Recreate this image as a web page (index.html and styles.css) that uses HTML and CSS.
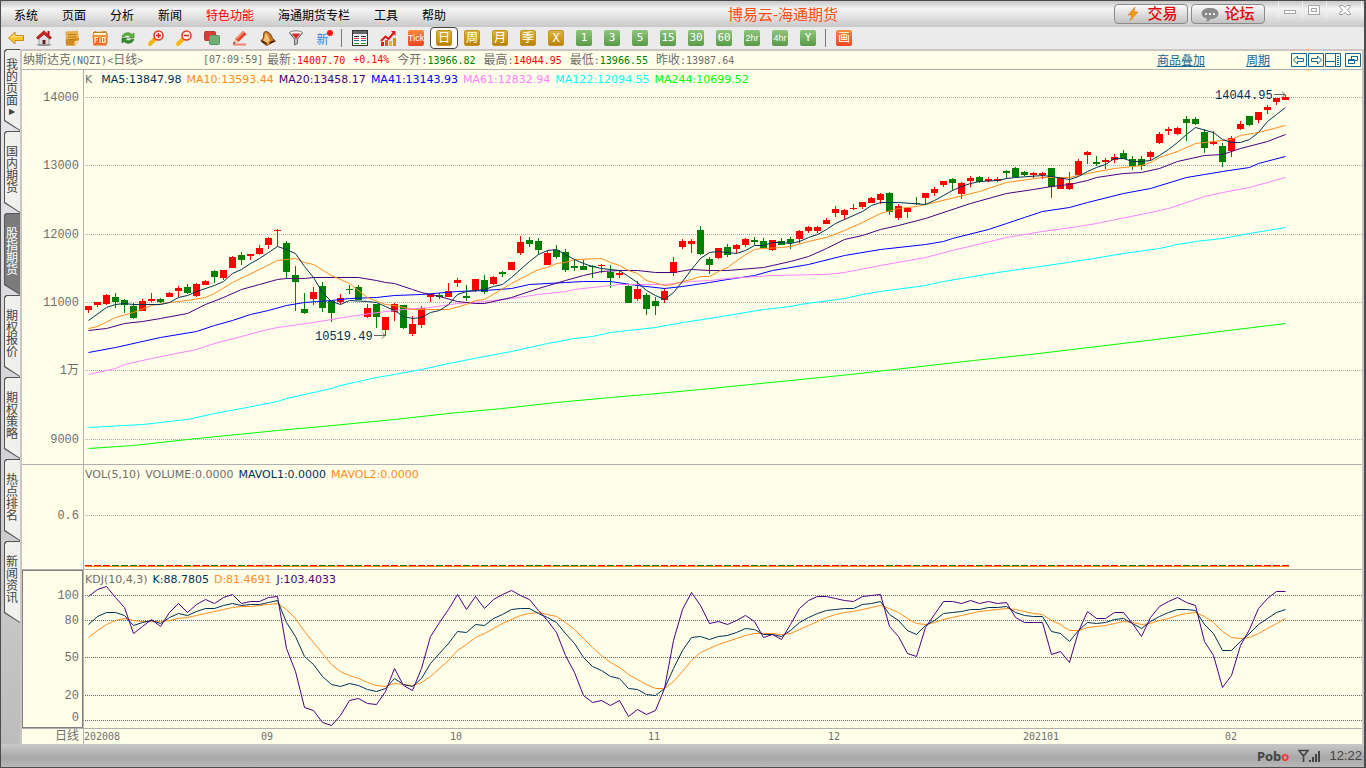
FILE: index.html
```html
<!DOCTYPE html>
<html lang="zh-CN">
<head>
<meta charset="utf-8">
<title>博易云-海通期货</title>
<link rel="stylesheet" href="styles.css">
</head>
<body>
<div class="app">
  <header class="titlebar">
    <nav class="menu">
      <button>系统</button><button>页面</button><button>分析</button><button>新闻</button><button class="hot">特色功能</button><button>海通期货专栏</button><button>工具</button><button>帮助</button>
    </nav>
    <h1 class="title">博易云-海通期货</h1>
    <div class="actions">
      <button class="pill"><svg width="18" height="16" viewBox="0 0 18 16"><path d="M11 1 4 9h4l-2 6 8-9H10z" fill="#f59a1d" stroke="#d97a10" stroke-width=".6"/></svg>交易</button>
      <button class="pill"><svg width="18" height="16" viewBox="0 0 18 16"><path d="M9 2c5 0 8.500 2 8.500 5.500S14 13 9.500 13c-1 2-3 2.500-4.500 2.500 1-.8 1-2 .8-3C2.500 12 .5 10 .5 7.500.5 4 4 2 9 2z" fill="#8a8a8a"/><g fill="#eee"><rect x="4" y="7" width="2" height="2"/><rect x="8" y="7" width="2" height="2"/><rect x="12" y="7" width="2" height="2"/></g></svg>论坛</button>
    </div>
    <div class="winctl">
      <button aria-label="最小化"><svg width="12" height="12" viewBox="0 0 12 12"><rect x=".5" y="6.500" width="11" height="3" fill="#fff" stroke="#a5a5a5"/></svg></button>
      <button aria-label="最大化"><svg width="12" height="12" viewBox="0 0 12 12"><path d="M.5 1.500h11v9H.5zM3.500 4.500h5v3h-5z" fill="#fff" stroke="#a5a5a5" fill-rule="evenodd"/></svg></button>
      <button class="close" aria-label="关闭"><svg width="12" height="12" viewBox="0 0 12 12"><path d="M.5 1.500h3.500l2 2 2-2h3.500v1L8.500 6l3 3.500v1H8l-2-2-2 2H.5v-1L3.500 6l-3-3.500z" fill="#fff" stroke="#9a9a9a"/></svg></button>
    </div>
  </header>

  <div class="toolbar">
    <button aria-label="后退"><svg viewBox="0 0 16 16"><path d="M.5 8 7 2v3.500h8.500v5H7V14z" fill="#fcc62c" stroke="#c98a12"/><path d="M3 8l3.500-3v1.500H14" fill="none" stroke="#ffe9a0"/></svg></button>
    <button aria-label="首页"><svg viewBox="0 0 16 16"><path d="M11.500 1h2v4h-2z" fill="#a61414"/><path d="M3 8l5-4 5 4v7.500H3z" fill="#dcdce2" stroke="#777" stroke-width=".6"/><path d="M8 .8 15.500 7.500 14 9.200 8 4.200 2 9.200.5 7.500z" fill="#d32222" stroke="#8e1010" stroke-width=".7"/><path d="M6.500 10h3v5.500h-3z" fill="#64241a"/><path d="M1 14h14v1.500H1z" fill="#999"/></svg></button>
    <button aria-label="笔记"><svg viewBox="0 0 16 16"><path d="M1.500 1.500 14 .8l1 9.200-4 5.500H2z" fill="#e8b04a"/><path d="M1.700 9.500l13.200-1.500.1 2-4 5.500H2z" fill="#d28b22"/><path d="M10.500 15.500V11.500l4.500-1.500z" fill="#ffe2a0"/><path d="M4 4.500h8M4 7h8.500M4 9.500h6" stroke="#b57c1c"/></svg></button>
    <button aria-label="F10 资料"><svg viewBox="0 0 16 16"><path d="M1 2l3-1 1 1 9-1 1.500 3v9.500L2 15.500z" fill="#c98322"/><path d="M2 3h12v4H2z" fill="#fff5dd"/><path d="M.5 5h15l-1 10.500h-13z" fill="#f06a28"/><path d="M.5 5h15l-.4 3H.8z" fill="#f7923c"/><path d="M3 13V7.500h3M3 10h2.500M8 7.500V13M10.500 7.500h2.500V12.500h-2.500z" fill="none" stroke="#fff3cf" stroke-width="1.200"/></svg></button>
    <button aria-label="刷新"><svg viewBox="0 0 16 16"><path d="M2 6.500C3.500 2.500 9 1.500 12 4.500L14 3v5H8.500l2-1.800C8 4.500 6 5 5 6.500z" fill="#5cb536" stroke="#2b7a19" stroke-width=".6"/><path d="M14 9.500c-1.500 4-7 5-10 2L2 13V8h5.500l-2 1.800c2.500 1.700 4.500 1.200 5.500-.3z" fill="#388d2c" stroke="#1f6516" stroke-width=".6"/></svg></button>
    <button aria-label="放大"><svg viewBox="0 0 16 16"><path d="M7 9 2 14" stroke="#f4b50f" stroke-width="4" stroke-linecap="round"/><circle cx="10.500" cy="5.500" r="4.500" fill="#fff1e8" stroke="#dd3d20" stroke-width="1.500"/><path d="M8 5.500h5M10.500 3v5" stroke="#e02020" stroke-width="1.500"/></svg></button>
    <button aria-label="缩小"><svg viewBox="0 0 16 16"><path d="M7 9 2 14" stroke="#f4b50f" stroke-width="4" stroke-linecap="round"/><circle cx="10.500" cy="5.500" r="4.500" fill="#fff1e8" stroke="#dd3d20" stroke-width="1.500"/><path d="M8 5.500h5" stroke="#e02020" stroke-width="1.500"/></svg></button>
    <button aria-label="叠加"><svg viewBox="0 0 16 16"><rect x=".5" y="1.500" width="11" height="9" rx="1" fill="#dc3c34" stroke="#b0403a"/><rect x="5.500" y="5.500" width="10" height="9" rx="1" fill="#6fae76" stroke="#5c9464"/></svg></button>
    <button aria-label="画线"><svg viewBox="0 0 16 16"><path d="M1 14.500h13" stroke="#f08072" stroke-width="2"/><path d="M3 9 11 1l3.500 3-8 8z" fill="#e8452c"/><path d="M4.500 9 11.500 2" stroke="#ff9a78" stroke-width="1.500"/><path d="M3 9l3.500 3L1 14z" fill="#f1c79b"/><path d="M1 14l2.500-1L2 11.500z" fill="#333"/></svg></button>
    <button aria-label="预警"><svg viewBox="0 0 16 16"><path d="M5 1.500c5 0 6.500 4 7.500 7l3 2.500-9 4.500L.8 11l2.200-2.500C4 6.500 3 2.500 5 1.500z" fill="#c8782a" stroke="#7a3d12"/><path d="M5.500 3c2 1 3.500 4 4.500 8L6 13 3 10.500c2-2 1.500-5 2.500-7.500z" fill="#f6c16c"/><path d="M2 11l5 3 7-3" fill="none" stroke="#4b210b" stroke-width="1.500"/><circle cx="8" cy="13" r="1.500" fill="#e8a23a"/></svg></button>
    <button aria-label="过滤"><svg viewBox="0 0 16 16"><path d="M1.500 3 6.500 9v6l3-1.500V9l5-6z" fill="#bfc3c9" stroke="#666"/><ellipse cx="8" cy="3" rx="6.500" ry="2.200" fill="#f5f5f5" stroke="#777"/><path d="M4 3.500h8L8 9z" fill="#e42626"/></svg></button>
    <button class="new">新<i></i></button>
    <span class="sep"></span>
    <button aria-label="报价表"><svg viewBox="0 0 16 16"><rect x=".5" y=".5" width="15" height="15" fill="#fff" stroke="#333"/><path d="M1 1h14v3H1z" fill="#666"/><path d="M2 6.500h5M9 6.500h5" stroke="#222"/><path d="M2 8.500h5M9 8.500h5" stroke="#d33"/><path d="M2 10.500h5M9 10.500h5" stroke="#26a"/><path d="M2 13.500h5M9 13.500h5" stroke="#291"/></svg></button>
    <button aria-label="走势"><svg viewBox="0 0 16 16"><path d="M1 12h3v4H1z" fill="#c82a18"/><path d="M5 10h3v6H5z" fill="#df5a20"/><path d="M9 11h3v5H9z" fill="#f2b32a"/><path d="M13 8h3v8h-3z" fill="#c89612"/><path d="M1 11 5.500 6.500 8.500 9 14 2.500" fill="none" stroke="#e01818" stroke-width="2"/><path d="M11 1h4.500v5z" fill="#e01818"/></svg></button>
    <button><b class="tile red tiny">Tick</b></button>
    <button class="on"><b class="tile gold">日</b></button>
    <button><b class="tile gold">周</b></button>
    <button><b class="tile gold">月</b></button>
    <button><b class="tile gold">季</b></button>
    <button><b class="tile gold">X</b></button>
    <button><b class="tile green">1</b></button>
    <button><b class="tile green">3</b></button>
    <button><b class="tile green">5</b></button>
    <button><b class="tile green">15</b></button>
    <button><b class="tile green">30</b></button>
    <button><b class="tile green">60</b></button>
    <button><b class="tile green tiny">2hr</b></button>
    <button><b class="tile green tiny">4hr</b></button>
    <button><b class="tile green">Y</b></button>
    <span class="sep"></span>
    <button><b class="tile red">画</b></button>
  </div>

  <div class="body">
    <aside class="tabs">
      <button>我的页面<em>▶</em></button>
      <button>国内期货</button>
      <button class="active">股指期货</button>
      <button>期权报价</button>
      <button>期权策略</button>
      <button>热点排名</button>
      <button>新闻资讯</button>
    </aside>
    <main class="chart">
      <div class="info">
        <span class="name"><q>纳斯达克</q>(NQZI)&lt;<q>日线</q>&gt;</span>
        <span class="time">[07:09:59]</span>
        <span><q>最新</q>:<b class="up">14007.70</b></span>
        <span class="up">+0.14%</span>
        <span><q>今开</q>:<b class="down">13966.82</b></span>
        <span><q>最高</q>:<b class="up">14044.95</b></span>
        <span><q>最低</q>:<b class="down">13966.55</b></span>
        <span><q>昨收</q>:13987.64</span>
        <div class="links">
          <a href="#overlay">商品叠加</a>
          <a href="#period">周期</a>
          <div class="icons">
            <button aria-label="左移"><svg width="16" height="14" viewBox="0 0 16 14"><path d="M.5.5h15v13H.5zM2.500 7l4-4v2.500h6v3h-6V11z"/></svg></button>
            <button aria-label="右移"><svg width="16" height="14" viewBox="0 0 16 14"><path d="M.5.5h15v13H.5zM13.500 7l-4-4v2.500h-6v3h6V11z"/></svg></button>
            <button aria-label="侧栏"><svg width="16" height="14" viewBox="0 0 16 14"><path d="M.5.5h15v13H.5zM10.500 1v13M1 8.500h9M12 3.500h2M12 5.500h2M12 7.500h2M12 9.500h2M12 11.500h2"/></svg></button>
            <button aria-label="还原" class="restore"><svg width="16" height="14" viewBox="0 0 16 14"><path d="M.5.5h15v13H.5zM6.500 6V3.500h6v4H10M6 3.500h7M3.500 6.500h6v4h-6zM3 7.500h7"/></svg></button>
          </div>
        </div>
      </div>
      <section class="panel price">
        <svg class="axis" id="price-axis"></svg>
        <div class="plot">
          <p class="legend"><span>K</span><span class="c5 first">MA5:13847.98</span><span class="c10">MA10:13593.44</span><span class="c20">MA20:13458.17</span><span class="c41">MA41:13143.93</span><span class="c61">MA61:12832.94</span><span class="c122">MA122:12094.55</span><span class="c244">MA244:10699.52</span></p>
          <svg id="price-plot"></svg>
        </div>
      </section>
      <section class="panel vol">
        <svg class="axis" id="vol-axis"></svg>
        <div class="plot">
          <p class="legend"><span>VOL(5,10)</span><span>VOLUME:0.0000</span><span class="c5">MAVOL1:0.0000</span><span class="c10">MAVOL2:0.0000</span></p>
          <svg id="vol-plot"></svg>
        </div>
      </section>
      <section class="panel kdj">
        <svg class="axis boxed" id="kdj-axis"></svg>
        <div class="plot">
          <p class="legend"><span>KDJ(10,4,3)</span><span class="c5">K:88.7805</span><span class="c10">D:81.4691</span><span class="c20">J:103.4033</span></p>
          <svg id="kdj-plot"></svg>
        </div>
      </section>
      <section class="panel dates">
        <span class="axis">日线</span>
        <div class="plot"><svg id="date-plot"></svg></div>
      </section>
    </main>
  </div>

  <footer class="status">
    <strong>Pob<i>o</i></strong>
    <svg width="22" height="14" viewBox="0 0 22 14"><path d="M1 1.500h9L6.500 6h-2zM5.500 5v8" fill="none" stroke="#444" stroke-width="1.600"/><path d="M11 11h2v2h-2zM14 8h2v5h-2zM17 5h2v8h-2zM20 2h2v11h-2z" fill="#444"/></svg>
    <time>12:22</time>
  </footer>
</div>
<script src="chart.js"></script>
</body>
</html>
```

FILE: styles.css
```css
* { box-sizing: border-box; }
body { margin: 0; font-family: "Liberation Sans", "Noto Sans CJK SC", sans-serif; font-size: 12px; color: #000; }
button { font: inherit; color: inherit; border: 0; padding: 0; margin: 0; background: none; }
svg { display: block; }
b, i, em { font-weight: normal; font-style: normal; }
q { quotes: none; font-size: 12px; }

.app { height: 100vh; display: flex; flex-direction: column; border: 1px solid #4d4b4d; border-right-width: 2px; background: #c4c4c4; overflow: hidden; }

.titlebar { display: flex; align-items: center; flex: none; height: 26px; padding-left: 13px; background: linear-gradient(#c6c6c6, #f4f4f4 30%, #e6e6e6 55%, #c8c8c8); }
.menu { display: flex; gap: 24px; padding-top: 3px; line-height: 18px; }
.menu .hot { color: #f00; }
.title { flex: 1; margin: 0; padding: 2px 0 0 6px; text-align: center; font-size: 15px; line-height: 20px; font-weight: normal; color: #ff4e10; }
.actions { display: flex; gap: 3px; }
.pill { display: flex; align-items: center; justify-content: center; gap: 5px; width: 74px; height: 20px; border: 1px solid #8a8a8a; border-radius: 4px; background: linear-gradient(#fbfbfb, #e2e2e2 45%, #c2c2c2); color: #e00808; font-size: 15px; font-weight: 500; line-height: 18px; }
.winctl { display: flex; align-self: flex-start; margin: 0 2px 0 13px; }
.winctl button { width: 24px; height: 17px; padding: 2px 5px; border-left: 1px solid #f2f2f2; }
.winctl .close { width: 36px; padding-left: 12px; border-right: 1px solid #f2f2f2; }

.toolbar { display: flex; flex: none; height: 22px; padding-left: 1px; background: #ebebeb; }
.toolbar button { display: flex; align-items: center; justify-content: center; width: 28px; height: 22px; }
.toolbar svg { width: 16px; height: 16px; }
.toolbar .on { border: 1px solid #444; border-radius: 4px; background: #fff; }
.toolbar .new { position: relative; padding-right: 3px; font-size: 12px; color: #2f87dd; }
.new i { position: absolute; top: 3px; right: 5px; width: 6px; height: 6px; border-radius: 50%; background: #f11; }
.sep { width: 8px; height: 18px; margin-top: 2px; background: linear-gradient(#777, #777) 3px 0 / 1px 100% no-repeat; }
.tile { width: 16px; height: 16px; border-radius: 2px; color: #fff; text-align: center; font: 12px/16px "DejaVu Sans Mono", "Noto Sans CJK SC", monospace; }
.tile.tiny { font: 9px/16px "Liberation Sans", sans-serif; }
.gold { background: linear-gradient(#d9b54c, #cc9a10 60%, #b58010); border: 1px solid #c8921c; line-height: 14px; }
.green { background: linear-gradient(#8fc57c, #579a46); font-size: 11px; }
.red { background: linear-gradient(#fa8a3a, #ea4420); }

.body { display: flex; flex: 1; min-height: 0; }
.tabs { display: flex; flex-direction: column; flex: none; width: 19px; padding-left: 3px; background: linear-gradient(#e8e8ec, #d2d2d6 60%, #bcbcbc); }
.tabs button { position: relative; z-index: 0; display: flex; flex-direction: column; align-items: center; justify-content: center; width: 16px; height: 82px; padding: 0 2px 5px; color: #444; line-height: 12px; word-break: break-all; white-space: normal; background: #555; clip-path: polygon(0 2px, 2px 0, 100% 0, 100% 100%, 0 72px); }
.tabs button::before { content: ""; position: absolute; z-index: -1; inset: 1px 0 1px 1px; background: #f0f0ec; clip-path: polygon(0 2px, 2px 0, 100% 0, 100% 100%, 0 70px); }
.tabs .active { color: #fff; }
.tabs .active::before { background: #7b7b7b; }
.tabs em { font: 8px/10px "DejaVu Sans", sans-serif; }

.chart { display: flex; flex-direction: column; flex: 1; min-width: 0; border: 2px solid #cdc4c4; border-bottom: 0; background: #ffffe9; color: #6e6e6e; }
.info { display: flex; align-items: center; flex: none; gap: 8px; height: 19px; padding: 0 1px; border-bottom: 1px solid #b0b0b0; font: 10px/18px "DejaVu Sans Mono", monospace; white-space: nowrap; }
.info q { font-family: "Noto Sans CJK SC", sans-serif; }
.info .name { width: 172px; }
.info .time { width: 56px; }
.up { color: #f00; }
.down { color: #008000; }
.links { display: flex; align-items: center; margin-left: auto; font: 12px/18px "Noto Sans CJK SC", sans-serif; }
.links a { margin-right: 41px; color: #17668f; }
.links a + a { margin-right: 21px; }
.icons { display: flex; gap: 1px; }
.icons .restore { margin-left: 3px; }
.icons path { fill: none; stroke: #17668f; }

.panel { display: flex; flex: none; border-bottom: 1px solid #b0b0b0; }
.price { flex: 1; min-height: 0; }
.vol { height: 105px; }
.kdj { height: 159px; }
.dates { height: 15px; border-bottom: 0; }
.axis { flex: none; width: 61px; height: 100%; }
.boxed { border: 1px solid #808080; }
.dates .axis { padding-right: 4px; text-align: right; line-height: 15px; }
.plot { position: relative; flex: 1; min-width: 0; border-left: 1px solid #b0b0b0; overflow: hidden; }
.plot svg { width: 100%; height: 100%; }
.legend { position: absolute; top: 1px; left: 1px; display: flex; gap: 5px; margin: 0; font: 11px/18px "DejaVu Sans", sans-serif; white-space: nowrap; }
.legend .first { margin-left: 4px; }
.c5 { color: #003058; }
.c10 { color: #ff8c1a; }
.c20 { color: #4b0082; }
.c41 { color: #00f; }
.c61 { color: #ff80ff; }
.c122 { color: #00ffff; }
.c244 { color: #00ff00; }

svg text { font: 12px "Liberation Mono", "Noto Sans CJK SC", monospace; fill: #6e6e6e; }
.axis text { text-anchor: end; }
#date-plot text { font: 10px "DejaVu Sans Mono", monospace; }
#price-plot .mark { fill: #003058; }
.line { fill: none; stroke: currentColor; }
.grid { stroke: #aaa; stroke-dasharray: 1 1; }
.kdj .grid { stroke: #666; }
.arrow { fill: none; stroke: #666; }

.status { display: flex; align-items: center; justify-content: flex-end; flex: none; gap: 9px; height: 23px; padding-right: 2px; background: linear-gradient(#c8c8c8, #a8a8a8 60%, #b8b8b8); color: #444; }
.status strong { font: bold 13px/20px "Noto Sans", sans-serif; }
.status strong i { color: #f33; font-weight: bold; }
.status time { font-size: 13px; }
```

FILE: chart.js
```js
const NS = 'http://www.w3.org/2000/svg';
const STEP = 9;
const LEFT = 84;
const TOP = { price: 70, vol: 465, kdj: 570 };

function add(parent, tag, attrs, text) {
  const el = document.createElementNS(NS, tag);
  for (const k in attrs) el.setAttribute(k, attrs[k]);
  if (text) el.textContent = text;
  parent.appendChild(el);
  return el;
}
const get = id => document.getElementById(id);

function grid(name, rows) {
  const inset = name === 'kdj' ? 1 : 0;
  for (const [label, y, labelY] of rows) {
    const row = y - TOP[name];
    add(get(name + '-plot'), 'line', { class: 'grid', x1: 1, x2: '100%', y1: row + 0.5, y2: row + 0.5 });
    add(get(name + '-axis'), 'text', { x: 57 - inset, y: (labelY || y) - TOP[name] + 4 - inset }, label);
  }
}
grid('price', [['14000', 97], ['13000', 165], ['12000', 234], ['11000', 302], ['1万', 370], ['9000', 439]]);
grid('vol', [['0.6', 515]]);
grid('kdj', [['100', 595], ['80', 620], ['50', 657], ['20', 695], ['0', 720, 717]]);

// direction, high, body top, body bottom, low
const candles = `r306 306 310 313,r302 302 305 307,r294 295 304 305,g293 297 302 308,g299 300 305 313,g303 306 318 319,r299 301 311 311,r293 299 301 302,g298 299 302 303,r292 293 297 297,
r286 288 291 297,g284 287 293 294,r283 284 296 297,r280 281 285 285,g270 271 277 283,r270 270 278 280,r256 257 268 268,g252 255 260 265,r254 254 256 260,r245 248 254 255,
r237 238 245 249,r229 230 231 246,g241 243 272 278,g266 275 282 311,g293 309 313 314,r287 292 299 305,g282 286 308 312,g301 301 313 322,r294 298 302 304,g285 289 290 294,
g285 287 300 300,r304 308 317 318,g304 304 317 328,r317 317 330 336,r303 304 312 321,g305 305 328 329,r316 324 334 336,r306 308 325 328,r294 294 297 302,g293 295 297 299,
r283 291 297 297,r278 280 283 287,g285 296 298 301,r279 279 290 292,g275 280 292 294,r276 277 284 285,g271 272 274 277,r262 262 270 270,r236 242 253 255,g237 240 244 247,
g238 241 250 255,r251 253 265 265,g245 250 257 259,g249 252 270 272,g260 266 268 271,g260 266 270 270,g265 266 267 278,r264 265 266 273,g265 272 278 288,r270 273 275 278,
g285 286 303 303,r281 289 299 301,g293 295 309 315,g297 301 306 315,r288 291 300 303,r257 262 273 276,r239 241 247 249,r239 241 244 253,g226 230 254 255,g257 259 265 274,
r248 248 258 259,g244 247 255 257,r244 245 249 253,r238 239 245 247,g237 240 242 245,g238 241 248 248,r240 240 250 251,g238 241 245 245,g237 239 243 249,r230 231 239 243,
r226 227 231 233,r226 227 231 233,r218 220 224 224,r206 209 213 217,r209 210 215 220,r204 208 209 210,r202 202 207 209,r197 198 203 203,r193 194 200 204,g192 193 212 215,
r204 206 218 220,r208 208 212 218,g197 203 204 205,r193 193 198 204,r187 189 193 196,r181 181 185 187,g178 179 183 191,r182 183 194 199,r176 178 181 187,g176 177 182 183,
r177 179 181 182,r177 179 181 182,g170 171 173 178,g167 168 177 178,g171 172 175 176,r172 173 175 178,r172 173 175 179,g168 168 187 198,r178 178 189 189,r172 183 189 190,
r159 161 175 175,r151 152 155 164,g156 162 164 166,r158 160 162 169,r154 157 160 163,g150 153 159 159,g156 159 166 170,g156 159 166 170,r151 152 157 161,r132 134 143 144,
r127 129 131 135,r127 128 134 135,g116 119 123 141,g117 119 124 125,g129 132 148 153,r131 142 144 145,g143 146 162 167,r136 138 151 157,r121 124 129 130,g116 116 125 126,
r112 112 120 123,r105 107 110 114,r98 98 102 105,r95 97 100 100`.split(',').map(s => s.trim());

candles.forEach((c, i) => {
  const fill = c[0] === 'r' ? '#ff0000' : '#008000';
  const [hi, top, bottom, lo] = c.slice(1).split(' ').map(n => n - TOP.price);
  const x = 88 - LEFT + i * STEP;
  add(get('price-plot'), 'rect', { x, y: hi, width: 1, height: lo - hi, fill });
  add(get('price-plot'), 'rect', { x: x - 3, y: top, width: 7, height: bottom - top, fill });
  add(get('vol-plot'), 'rect', { x: x - 3, y: 100, width: 7, height: 1, fill });
  if (i) add(get('vol-plot'), 'rect', { x: x - 5, y: 100, width: 2, height: 1, fill: '#ffffff' });
});
add(get('vol-plot'), 'rect', { x: 1, y: 101, width: 1204, height: 1, fill: '#ff8c1a' });

function line(svg, cls, pts, top) {
  const points = pts.map(([x, y]) => `${x - LEFT + 0.5},${y - top + 0.5}`).join(' ');
  add(svg, 'polyline', { class: 'line ' + cls, points });
}
const averages = {
  c244: '88,448 133,445 187,439 277,430 322,426 394,419 448,413 502,408 556,402 610,397 646,394 700,389 850,374 973,360 1030,354 1147,340 1285,323',
  c122: '88,427 124,425 142,424 187,419 214,413 241,408 277,401 286,398 331,388 340,385 376,377 394,374 421,369 448,363 484,356 511,351 547,343 574,338 592,336 610,332 655,327 682,322 709,318 727,315 763,309 790,306 799,304 844,298 862,294 880,291 925,285 943,281 997,272 1033,267 1087,259 1123,253 1159,248 1177,244 1195,241 1222,238 1249,233 1285,227',
  c41: '88,352 115,347 160,337 196,331 214,325 232,320 250,314 268,310 286,305 304,302 331,300 349,298 376,297 394,295 421,294 457,291 484,290 511,288 529,284 565,282 583,281 610,281 637,285 664,288 682,286 709,282 727,279 754,275 772,270 808,264 844,255 880,249 925,244 943,241 952,238 988,229 1006,223 1024,217 1042,211 1069,207 1087,202 1123,193 1150,188 1186,177 1204,174 1222,171 1249,167 1258,163 1285,156',
  c61: '88,374 115,368 124,364 151,358 196,349 214,343 241,336 259,331 277,327 313,322 349,316 385,311 403,309 430,307 457,303 484,301 511,298 538,294 565,291 574,289 601,286 619,284 664,284 691,281 709,280 727,278 772,275 826,274 844,272 880,265 925,257 952,250 1006,237 1042,231 1078,226 1096,223 1150,212 1168,208 1204,196 1222,192 1249,187 1267,182 1285,177',
  c20: '88,330 106,328 124,323 142,321 160,318 187,313 205,304 223,297 241,289 259,284 277,279 286,278 304,278 313,277 358,277 376,280 385,282 394,283 412,289 421,292 439,296 457,301 475,303 484,303 511,297 538,288 565,280 583,275 601,271 619,270 637,270 655,272 673,272 691,269 709,270 727,270 763,267 790,261 808,256 826,248 844,239 862,235 880,229 898,225 925,218 970,203 1006,193 1033,189 1051,186 1069,184 1087,180 1096,177 1123,173 1141,172 1159,168 1177,161 1204,155 1222,154 1240,148 1267,141 1285,134',
  c10: '88,328 97,326 115,317 133,312 151,305 169,302 187,300 205,297 214,293 232,282 259,269 277,260 295,258 304,262 313,264 331,275 349,283 367,297 385,304 394,305 412,309 448,309 466,304 475,300 484,299 511,283 538,269 547,267 556,263 565,262 574,259 601,258 610,262 619,265 628,270 637,273 646,280 664,285 673,284 682,281 691,279 700,276 709,276 718,271 727,267 745,254 754,249 763,248 781,247 790,246 808,241 826,237 844,230 862,222 880,213 898,208 916,206 934,202 979,191 1006,182 1042,177 1069,177 1087,173 1114,168 1141,165 1150,162 1159,157 1177,151 1195,143 1213,141 1231,139 1240,135 1258,132 1285,125',
  c5: '88,320 106,307 115,304 124,303 133,304 160,304 169,302 178,297 187,295 196,291 214,285 223,281 232,273 241,269 250,263 259,258 268,252 277,246 286,249 295,253 304,266 313,277 322,292 331,301 340,304 349,300 367,301 376,302 385,306 394,310 403,316 412,318 421,317 430,312 439,310 448,304 457,294 466,291 475,290 484,289 493,286 502,284 511,277 529,261 538,254 547,250 556,249 565,254 574,259 583,263 592,266 601,268 610,269 619,270 628,276 637,282 646,290 655,295 664,299 673,292 682,281 691,269 700,258 709,252 718,251 736,253 745,250 754,245 763,245 772,242 781,242 790,243 799,241 808,237 817,234 826,229 835,223 844,219 862,211 871,205 880,202 898,202 925,204 934,200 943,195 952,190 961,186 970,183 979,181 997,180 1006,178 1015,177 1042,175 1051,176 1069,179 1078,176 1087,171 1096,167 1105,164 1114,158 1123,158 1132,161 1141,161 1150,160 1159,155 1168,149 1177,142 1186,134 1195,127 1213,132 1222,139 1231,142 1240,142 1249,139 1258,132 1267,121 1276,114 1285,107'
};
for (const cls in averages) {
  line(get('price-plot'), cls, averages[cls].split(' ').map(p => p.split(',').map(Number)), TOP.price);
}

for (const [label, x, y] of [['10519.49', 315, 340], ['14044.95', 1215, 99]]) {
  const px = x - LEFT, py = y - TOP.price;
  add(get('price-plot'), 'text', { class: 'mark', x: px, y: py }, label);
  add(get('price-plot'), 'path', { class: 'arrow', d: `M${px + 59} ${py - 4.5}h11m-3 -3l3 3l-3 3` });
}

// oscillator values in thirds of a pixel below the base row
const BASE = 565;
const kdj = {
  c10: [217,196,178,166,160,166,170,170,170,166,160,157,151,145,139,133,127,124,124,121,118,115,133,160,199,232,265,298,319,331,340,352,361,364,355,358,361,352,333,310,286,256,238,217,205,190,175,163,151,145,142,148,154,172,193,220,247,270,292,307,328,343,358,370,370,349,319,286,262,250,238,229,220,211,205,205,205,208,205,193,181,169,157,148,142,139,133,127,121,130,142,160,175,178,172,163,157,151,145,139,136,133,130,133,139,145,148,166,178,196,196,187,184,181,175,169,172,178,175,166,160,151,145,142,154,172,199,217,220,217,205,190,175,160],
  c5: [179,154,142,142,151,181,172,166,175,157,145,151,139,130,130,121,115,121,118,118,112,106,172,213,274,298,333,358,364,355,361,373,379,370,340,358,364,340,295,265,235,199,202,178,181,160,148,133,130,130,145,157,172,205,235,277,304,316,334,340,370,373,388,391,370,310,256,217,214,223,214,211,202,190,193,208,208,214,196,172,157,145,136,133,130,130,118,115,109,148,166,196,208,180,166,145,142,139,133,133,127,127,124,142,151,154,154,199,205,229,196,172,175,172,163,160,175,190,168,154,142,133,133,136,178,205,256,256,229,205,178,160,142,133],
  c20: [94,73,64,97,127,205,184,163,184,142,115,142,119,103,115,97,88,115,109,109,97,94,250,318,427,436,472,481,451,406,400,415,418,380,310,360,376,310,213,173,132,88,132,94,130,103,88,76,91,103,137,166,202,270,322,390,412,406,421,406,454,433,448,436,370,226,132,83,122,175,169,178,166,151,169,217,208,223,178,130,106,94,94,100,106,109,94,91,88,184,214,265,274,187,148,109,109,115,106,115,109,115,112,157,172,172,172,268,259,292,200,139,160,160,142,142,175,214,157,124,109,97,112,122,230,270,367,331,242,193,130,100,79,79]
};
for (const cls in kdj) {
  line(get('kdj-plot'), cls, kdj[cls].map((v, i) => [88 + i * STEP, BASE + Math.floor(v / 3)]), TOP.kdj);
}

for (const [label, x] of [['202008', 84], ['09', 261], ['10', 450], ['11', 648], ['12', 828], ['202101', 1023], ['02', 1225]]) {
  add(get('date-plot'), 'text', { x: x - LEFT, y: 11 }, label);
}
```
